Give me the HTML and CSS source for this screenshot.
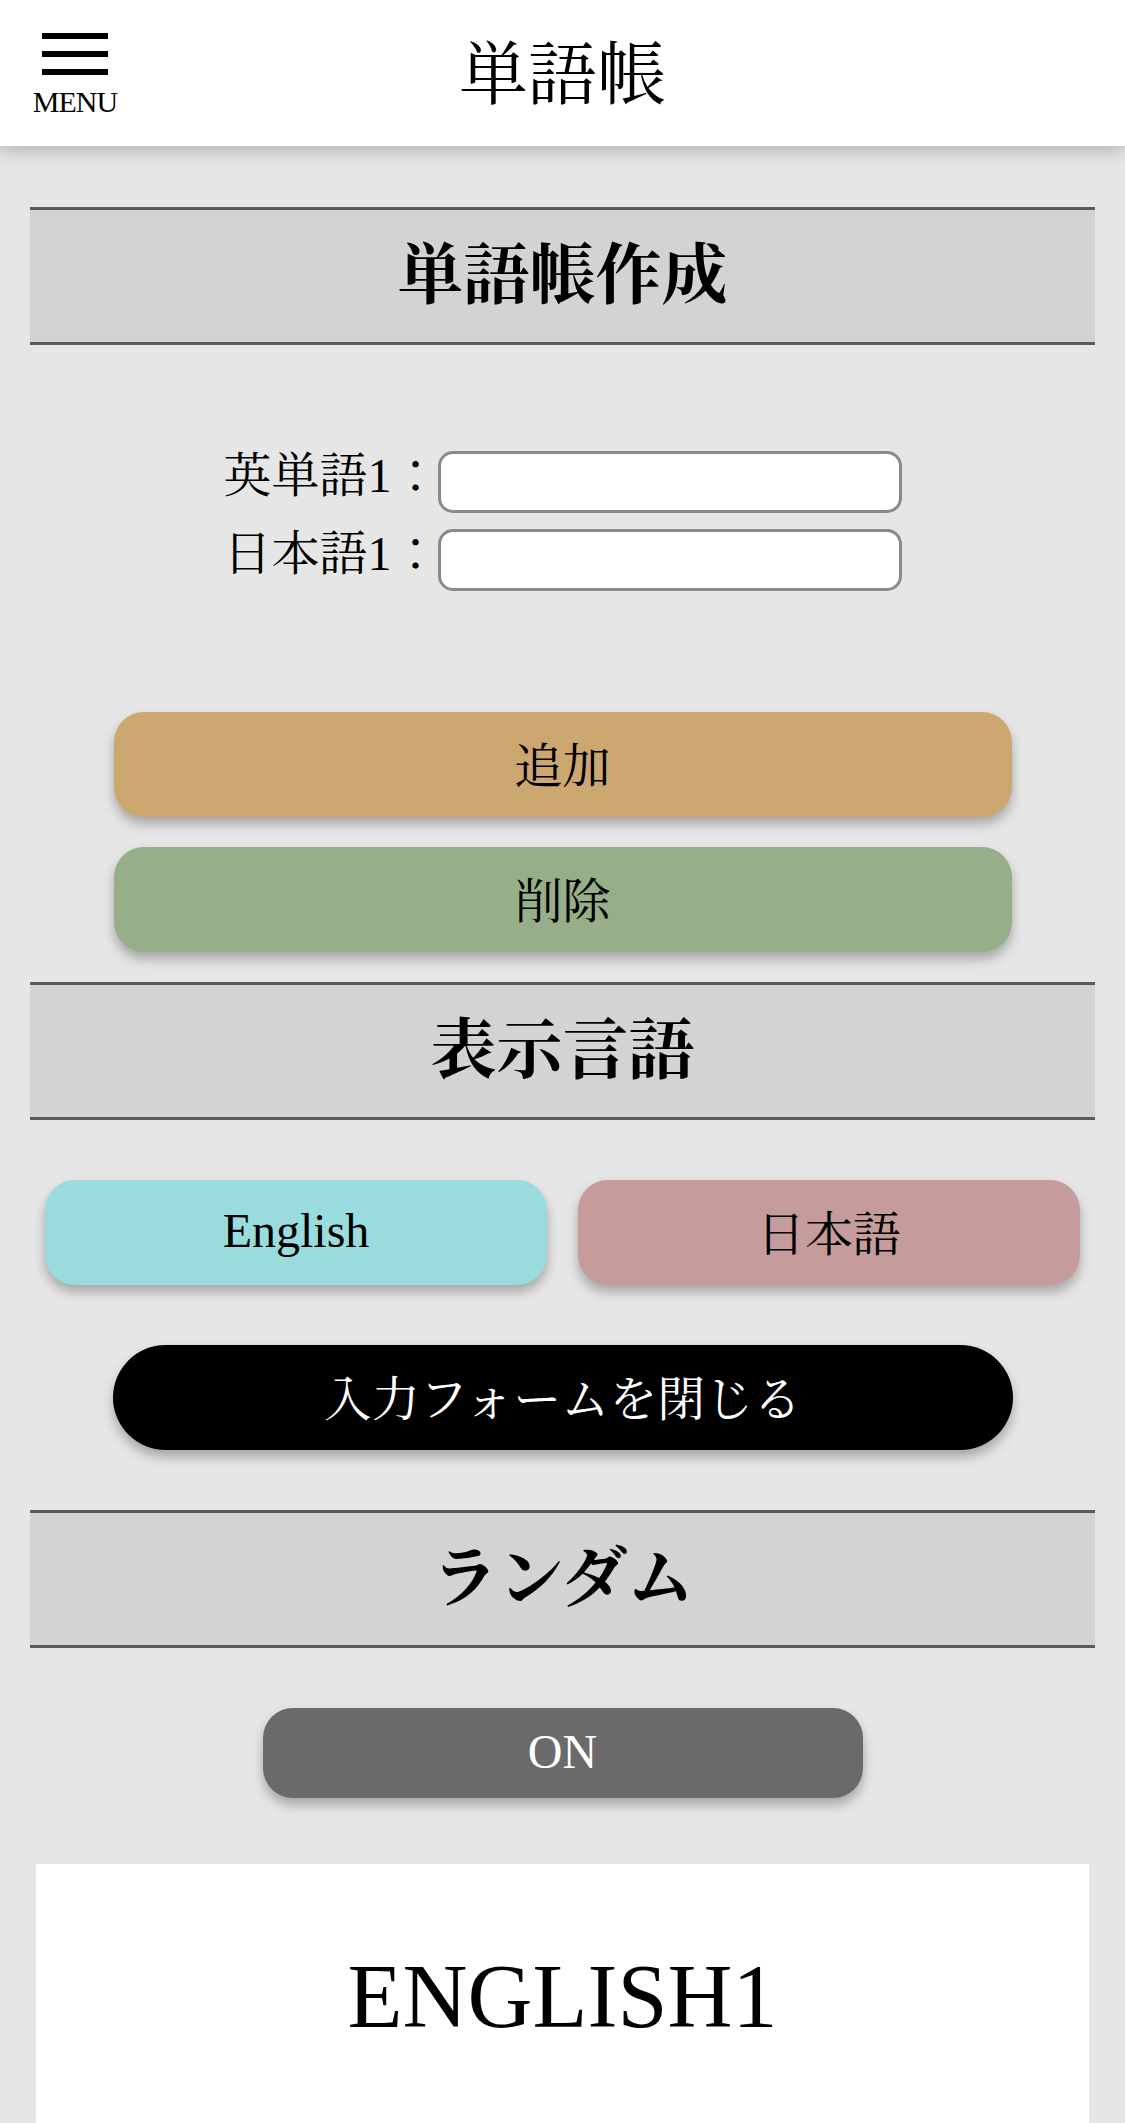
FILE: index.html
```html
<!DOCTYPE html>
<html lang="ja">
<head>
<meta charset="utf-8">
<title>単語帳</title>
<link rel="stylesheet" href="styles.css">
</head>
<body>
<header class="topbar">
  <div class="menu">
    <span class="bars"><i></i><i></i><i></i></span>
    <span class="menu-label">MENU</span>
  </div>
  <h1 class="title">単語帳</h1>
  <div class="spacer"></div>
</header>
<main class="main">
  <h2 class="section-head">単語帳作成</h2>
  <form class="form">
    <div class="field">
      <label class="field-label">英単語1：</label>
      <input class="field-input" type="text">
    </div>
    <div class="field">
      <label class="field-label">日本語1：</label>
      <input class="field-input" type="text">
    </div>
  </form>
  <div class="actions">
    <button class="btn btn-add" type="button">追加</button>
    <button class="btn btn-del" type="button">削除</button>
  </div>
  <h2 class="section-head">表示言語</h2>
  <div class="lang-row">
    <button class="btn btn-en" type="button">English</button>
    <button class="btn btn-ja" type="button">日本語</button>
  </div>
  <button class="btn btn-close" type="button">入力フォームを閉じる</button>
  <h2 class="section-head">ランダム</h2>
  <button class="btn btn-on" type="button">ON</button>
  <section class="card">
    <p class="card-word">ENGLISH1</p>
  </section>
</main>
</body>
</html>
```
FILE: styles.css
```css
html, body {
  margin: 0;
  padding: 0;
}
body {
  background: #e6e6e6;
  font-family: "Liberation Serif", "Noto Serif CJK JP", "Noto Sans CJK JP", serif;
  color: #000;
}
.topbar {
  height: 146px;
  background: #fff;
  display: grid;
  grid-template-columns: 1fr auto 1fr;
  align-items: center;
  box-shadow: 0 5px 16px rgba(0, 0, 0, 0.22);
  position: relative;
  z-index: 1;
}
.menu {
  align-self: start;
  justify-self: start;
  padding-top: 33px;
  padding-left: 32px;
  width: 86px;
  display: flex;
  flex-direction: column;
  align-items: center;
}
.bars {
  display: flex;
  flex-direction: column;
  gap: 12px;
}
.bars i {
  display: block;
  width: 66px;
  height: 6px;
  background: #000;
}
.menu-label {
  margin-top: 12px;
  font-size: 30px;
  line-height: 30px;
  letter-spacing: -1px;
}
.title {
  margin: 0;
  font-size: 69px;
  font-weight: normal;
  line-height: 1;
  padding-top: 6px;
}
.main {
  padding-top: 61px;
  display: flex;
  flex-direction: column;
}
.section-head {
  margin: 0 30px;
  background: #d3d3d3;
  border-top: 3px solid #5a5a5a;
  border-bottom: 3px solid #5a5a5a;
  height: 132px;
  line-height: 132px;
  text-align: center;
  font-size: 66px;
  font-weight: bold;
}
.form {
  margin: 106px 0 0;
  display: flex;
  flex-direction: column;
  gap: 16px;
}
.field {
  display: flex;
  justify-content: center;
  align-items: center;
}
.field-label {
  font-size: 48px;
  line-height: 1;
  width: 214px;
  padding-bottom: 12px;
  white-space: nowrap;
}
.field-input {
  box-sizing: border-box;
  width: 464px;
  height: 62px;
  margin: 0;
  border: 3px solid #8a8a8a;
  border-radius: 15px;
  background: #fff;
  font-size: 40px;
}
.actions {
  margin-top: 121px;
  display: flex;
  flex-direction: column;
  gap: 30px;
  align-items: center;
  margin-bottom: 30px;
}
.btn {
  box-sizing: border-box;
  border: none;
  margin: 0;
  padding: 0 0 4px;
  font-family: inherit;
  font-size: 48px;
  color: #000;
  height: 105px;
  border-radius: 30px;
  box-shadow: 0 7px 12px rgba(0, 0, 0, 0.28);
  cursor: pointer;
}
.btn-add,
.btn-del {
  width: 898px;
}
.btn-add { background: #cca770; }
.btn-del { background: #97af88; }
.lang-row {
  margin: 60px 45px 0;
  display: grid;
  grid-template-columns: 1fr 1fr;
  gap: 31px;
}
.btn-en { background: #9adcdd; }
.btn-ja { background: #c69b9b; }
.btn-close {
  align-self: center;
  margin-top: 60px;
  margin-bottom: 60px;
  width: 900px;
  border-radius: 53px;
  background: #000;
  color: #fff;
}
.btn-on {
  align-self: center;
  margin-top: 60px;
  width: 600px;
  height: 90px;
  background: #6a6a6a;
  color: #fff;
}
.card {
  margin: 66px 36px 0;
  background: #fff;
  padding: 81px 0 95px;
  text-align: center;
}
.card-word {
  margin: 0;
  font-size: 90px;
  line-height: 1.15;
}
```
